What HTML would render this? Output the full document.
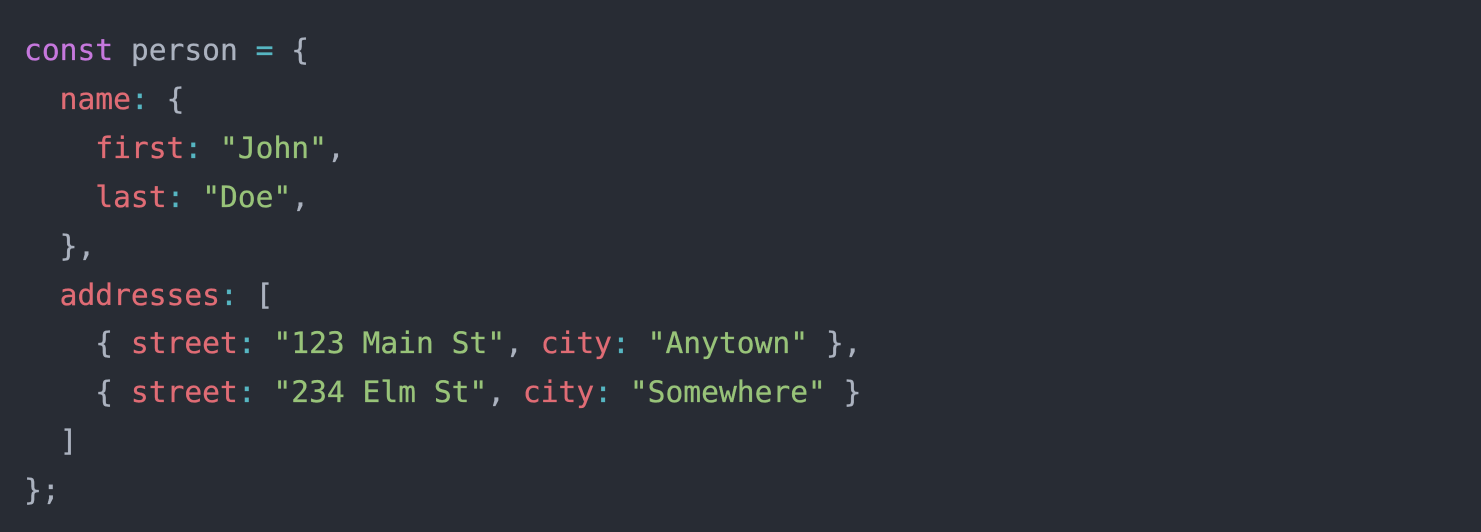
<!DOCTYPE html>
<html><head><style>
html,body{margin:0;padding:0;background:#282c34;width:1481px;height:532px;overflow:hidden}
pre{margin:0;position:absolute;left:24px;top:26px;font-family:"DejaVu Sans Mono","Liberation Mono",monospace;font-size:29.6px;line-height:48.9px;color:#abb2bf;-webkit-text-stroke:0.3px}
.k{color:#c678dd}.p{color:#e06c75}.s{color:#98c379}.o{color:#56b6c2}
</style></head><body>
<pre><span class="k">const</span> person <span class="o">=</span> {
  <span class="p">name</span><span class="o">:</span> {
    <span class="p">first</span><span class="o">:</span> <span class="s">"John"</span>,
    <span class="p">last</span><span class="o">:</span> <span class="s">"Doe"</span>,
  },
  <span class="p">addresses</span><span class="o">:</span> [
    { <span class="p">street</span><span class="o">:</span> <span class="s">"123 Main St"</span>, <span class="p">city</span><span class="o">:</span> <span class="s">"Anytown"</span> },
    { <span class="p">street</span><span class="o">:</span> <span class="s">"234 Elm St"</span>, <span class="p">city</span><span class="o">:</span> <span class="s">"Somewhere"</span> }
  ]
};</pre>
</body></html>
